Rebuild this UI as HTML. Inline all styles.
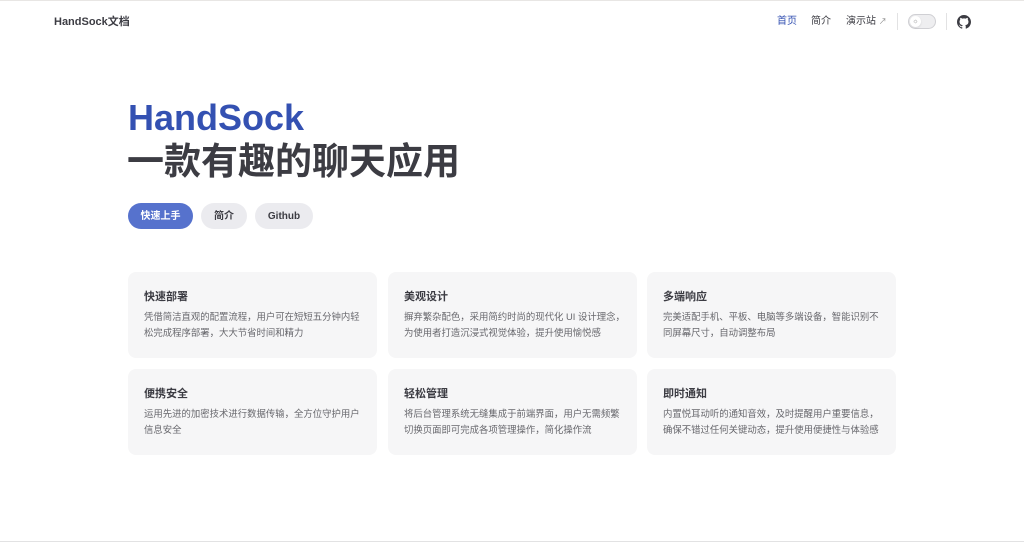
<!DOCTYPE html>
<html><head><meta charset="utf-8"><style>
*{margin:0;padding:0;box-sizing:border-box}
body{width:1024px;height:550px;background:#fff;font-family:"Liberation Sans","Noto Sans CJK SC",sans-serif;color:#3c3c43;position:relative;overflow:hidden}
.top{position:absolute;top:0;left:0;right:0;height:1px;background:#e8e6e4}
.bot{position:absolute;top:541px;left:0;right:0;height:1px;background:#e2e2e3}
.abs{position:absolute;white-space:nowrap}
.logo{left:54px;top:15px;font-size:11px;font-weight:bold;line-height:14px;color:#3c3c43}
.nav{top:15px;font-size:10px;line-height:14px;color:#3c3c43}
.div{position:absolute;top:13px;width:1px;height:17px;background:#e2e2e3}
.tog{left:908px;top:14px;width:28px;height:15px;border:1px solid #d0d0d4;border-radius:8px;background:#eeeef0}
.tog i{position:absolute;left:1px;top:1px;width:11px;height:11px;border-radius:50%;background:#fff;box-shadow:0 1px 2px rgba(0,0,0,.1);font-style:normal;font-size:7px;line-height:11px;text-align:center;color:#888}
h1{position:absolute;left:128px;top:97px;font-size:36px;line-height:42px;font-weight:bold;color:#3451b2}
h2{position:absolute;left:127px;top:139px;font-size:37px;line-height:46px;font-weight:bold;color:#3c3c43}
.btn{position:absolute;top:203px;height:26px;border-radius:13px;font-size:10px;font-weight:bold;line-height:28px;text-align:center;background:#ebebef;color:#3c3c43}
.card{position:absolute;width:249px;height:86px;background:#f6f6f7;border-radius:8px;padding:18px 10px 18px 16px}
.card b{display:block;font-size:11px;line-height:14px;color:#3c3c43;margin-bottom:5px}
.card p{font-size:9.4px;line-height:16px;color:#67676c}
</style></head><body>
<div class="top"></div>
<div class="abs logo">HandSock文档</div>
<div class="abs nav" style="left:777px;color:#3451b2">首页</div>
<div class="abs nav" style="left:811px">简介</div>
<div class="abs nav" style="left:846px">演示站 <span style="font-size:8px;color:#888">↗</span></div>
<div class="div" style="left:897px"></div>
<div class="abs tog"><i>☼</i></div>
<div class="div" style="left:946px"></div>
<svg class="abs" style="left:957px;top:15px" width="14" height="14" viewBox="0 0 16 16"><path fill="#3c3c43" d="M8 0C3.58 0 0 3.580 0 8c0 3.54 2.29 6.53 5.47 7.59.4.07.55-.17.55-.38v-1.33c-2.230.48-2.7-1.07-2.7-1.07-.36-.93-.89-1.17-.89-1.17-.73-.5.05-.49.05-.49.8.06 1.23.83 1.23.83.72 1.22 1.88.87 2.33.66.07-.52.28-.87.51-1.07-1.78-.2-3.65-.89-3.65-3.95 0-.87.31-1.590.82-2.15-.08-.2-.36-1.02.08-2.12 0 0 .67-.21 2.2.82a7.6 7.6 0 0 1 4 0c1.53-1.04 2.2-.82 2.2-.82.44 1.1.16 1.92.08 2.12.51.56.82 1.27.82 2.15 0 3.07-1.87 3.75-3.65 3.95.29.25.54.73.54 1.48v2.2c0 .21.15.46.55.38A8 8 0 0 0 16 8c0-4.42-3.58-8-8-8z"/></svg>
<h1>HandSock</h1>
<h2>一款有趣的聊天应用</h2>
<div class="btn" style="left:128px;width:65px;background:#5672cd;color:#fff">快速上手</div>
<div class="btn" style="left:201px;width:46px">简介</div>
<div class="btn" style="left:255px;width:58px">Github</div>
<div class="card" style="left:128px;top:272px"><b>快速部署</b><p>凭借简洁直观的配置流程，用户可在短短五分钟内轻松完成程序部署，大大节省时间和精力</p></div>
<div class="card" style="left:388px;top:272px"><b>美观设计</b><p>摒弃繁杂配色，采用简约时尚的现代化 UI 设计理念，为使用者打造沉浸式视觉体验，提升使用愉悦感</p></div>
<div class="card" style="left:647px;top:272px"><b>多端响应</b><p>完美适配手机、平板、电脑等多端设备，智能识别不同屏幕尺寸，自动调整布局</p></div>
<div class="card" style="left:128px;top:369px"><b>便携安全</b><p>运用先进的加密技术进行数据传输，全方位守护用户信息安全</p></div>
<div class="card" style="left:388px;top:369px"><b>轻松管理</b><p>将后台管理系统无缝集成于前端界面，用户无需频繁切换页面即可完成各项管理操作，简化操作流</p></div>
<div class="card" style="left:647px;top:369px"><b>即时通知</b><p>内置悦耳动听的通知音效，及时提醒用户重要信息，确保不错过任何关键动态，提升使用便捷性与体验感</p></div>
<div class="bot"></div>
</body></html>
